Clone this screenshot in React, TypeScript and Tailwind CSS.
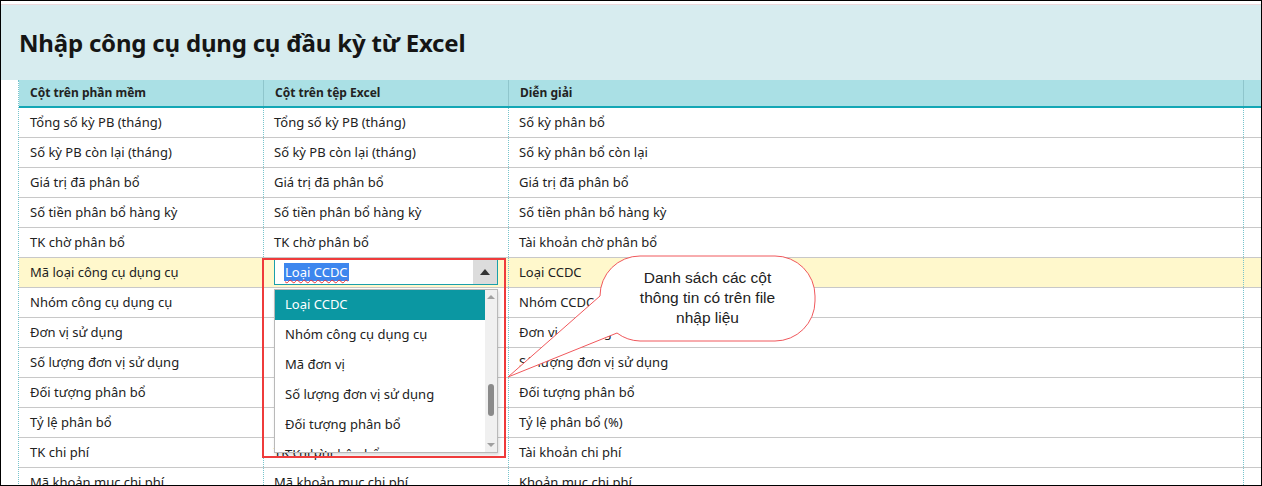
import React from 'react'

const rows: [string, string, string][] = [
  ['Tổng số kỳ PB (tháng)', 'Tổng số kỳ PB (tháng)', 'Số kỳ phân bổ'],
  ['Số kỳ PB còn lại (tháng)', 'Số kỳ PB còn lại (tháng)', 'Số kỳ phân bổ còn lại'],
  ['Giá trị đã phân bổ', 'Giá trị đã phân bổ', 'Giá trị đã phân bổ'],
  ['Số tiền phân bổ hàng kỳ', 'Số tiền phân bổ hàng kỳ', 'Số tiền phân bổ hàng kỳ'],
  ['TK chờ phân bổ', 'TK chờ phân bổ', 'Tài khoản chờ phân bổ'],
  ['Mã loại công cụ dụng cụ', '', 'Loại CCDC'],
  ['Nhóm công cụ dụng cụ', '', 'Nhóm CCDC'],
  ['Đơn vị sử dụng', '', 'Đơn vị sử dụng'],
  ['Số lượng đơn vị sử dụng', '', 'Số lượng đơn vị sử dụng'],
  ['Đối tượng phân bổ', '', 'Đối tượng phân bổ'],
  ['Tỷ lệ phân bổ', '', 'Tỷ lệ phân bổ (%)'],
  ['TK chi phí', 'TK chi phí', 'Tài khoản chi phí'],
  ['Mã khoản mục chi phí', 'Mã khoản mục chi phí', 'Khoản mục chi phí'],
]

const options = [
  'Loại CCDC',
  'Nhóm công cụ dụng cụ',
  'Mã đơn vị',
  'Số lượng đơn vị sử dụng',
  'Đối tượng phân bổ',
  'TK chờ phân bổ',
]

function Dropdown() {
  return (
    <>
      {/* combo input */}
      <div className="absolute left-[273px] top-[258px] flex h-[26px] w-[224px] border border-[#1a9fab] bg-white">
        <div className="flex flex-1 items-center pl-[9px]">
          <span className="bg-[#3d86ee] px-px leading-[18px] text-white underline decoration-[#e33] decoration-wavy decoration-1 underline-offset-2">
            Loại CCDC
          </span>
        </div>
        <div className="flex w-[24px] items-center justify-center bg-[#dcdcdc]">
          <svg width="10" height="6" viewBox="0 0 10 6">
            <path d="M0 6 L5 0 L10 6 Z" fill="#333" />
          </svg>
        </div>
      </div>

      {/* option list */}
      <div className="absolute left-[273px] top-[288px] flex h-[164px] w-[224px] overflow-hidden border border-[#b9b9b9] bg-white shadow-[1px_2px_3px_rgba(0,0,0,0.15)]">
        <div className="flex-1">
          {options.map((o, i) => (
            <div
              key={o}
              className={
                i === 0
                  ? 'flex h-[30px] items-center bg-[#0b97a2] px-[10px] text-white'
                  : 'flex h-[30px] items-center px-[10px] text-[#222]'
              }
            >
              {o}
            </div>
          ))}
        </div>
        <div className="flex w-[12px] flex-col items-center bg-[#f0f0f0]">
          <svg width="8" height="10" viewBox="0 0 8 10" className="mt-[2px]">
            <path d="M0 7 L4 3 L8 7 Z" fill="#a0a0a0" />
          </svg>
          <div className="mt-[82px] h-[32px] w-[6px] rounded-full bg-[#8a8a8a]" />
          <div className="flex-1" />
          <svg width="8" height="10" viewBox="0 0 8 10" className="mb-[2px]">
            <path d="M0 3 L4 7 L8 3 Z" fill="#a0a0a0" />
          </svg>
        </div>
      </div>

      {/* annotation frame */}
      <div className="absolute left-[261px] top-[257px] h-[200px] w-[244px] border-2 border-[#ef3b3b]" />
    </>
  )
}

function Callout() {
  return (
    <>
      <svg className="pointer-events-none absolute left-[-1px] top-[-1px]" width="1262" height="486">
        <path
          d="M600 296 A40 40 0 0 1 640 256 L775 256 A40 40 0 0 1 815 296 L815 301 A40 40 0 0 1 775 341 L640 341 A40 40 0 0 1 617 333 L508 377 Z"
          fill="#fff"
          stroke="#f0585c"
          strokeWidth="1"
        />
      </svg>
      <div className="absolute left-[609px] top-[267px] w-[195px] text-center font-['Liberation_Sans',Arial,sans-serif] text-[15.5px] leading-[20px] text-[#222]">
        Danh sách các cột
        <br />
        thông tin có trên file
        <br />
        nhập liệu
      </div>
    </>
  )
}

export default function App() {
  return (
    <div className="relative h-[486px] w-[1262px] overflow-hidden border border-black bg-white font-['Noto_Sans',sans-serif] text-[13px] text-[#222]">
      <div className="h-[3px] bg-white" />
      <div className="h-px bg-[#ecd9dc]" />
      <div className="flex h-[75px] items-center bg-[#d7ecef] pl-[18px]">
        <h1 className="text-[24px] font-bold tracking-[-0.2px] text-[#151515]">
          Nhập công cụ dụng cụ đầu kỳ từ Excel
        </h1>
      </div>

      <div className="ml-[17px] border-l border-dotted border-[#77c4cc]">
        <div className="flex h-[28px] border-b-2 border-[#13a7b5] bg-[#aae0e5] text-[12px] font-bold">
          <div className="flex w-[245px] items-center border-r border-[#8fc6cc] pl-[11px]">Cột trên phần mềm</div>
          <div className="flex w-[245px] items-center border-r border-[#8fc6cc] pl-[11px]">Cột trên tệp Excel</div>
          <div className="flex w-[735px] items-center border-r border-[#8fc6cc] pl-[11px]">Diễn giải</div>
          <div className="flex-1" />
        </div>
        {rows.map((r, i) => (
          <div
            key={i}
            className={
              i === 5
                ? 'flex h-[30px] border-b border-[#c8c8c8] bg-[#fff8cc]'
                : 'flex h-[30px] border-b border-[#c8c8c8]'
            }
          >
            <div className="flex w-[245px] items-center border-r border-dotted border-[#77c4cc] pl-[11px]">{r[0]}</div>
            <div className="flex w-[245px] items-center border-r border-dotted border-[#77c4cc] pl-[10px]">{r[1]}</div>
            <div className="flex w-[735px] items-center border-r border-dotted border-[#77c4cc] pl-[10px]">{r[2]}</div>
            <div className="flex-1" />
          </div>
        ))}
      </div>

      <Dropdown />
      <Callout />
    </div>
  )
}
